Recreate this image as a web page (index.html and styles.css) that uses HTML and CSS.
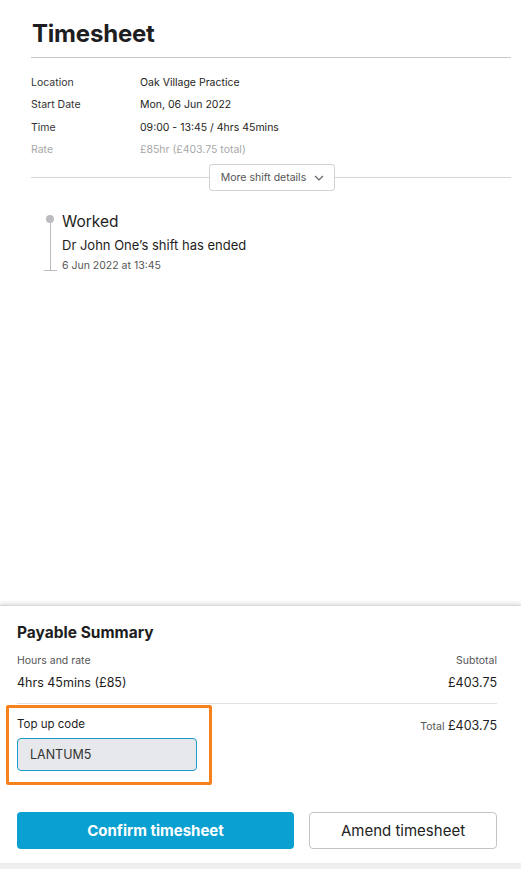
FILE: index.html
```html
<!DOCTYPE html>
<html lang="en">
<head>
<meta charset="utf-8">
<title>Timesheet</title>
<link rel="stylesheet" href="styles.css">
</head>
<body>
<div class="page">
  <main class="main">
    <h1 class="title">Timesheet</h1>
    <div class="details">
      <div class="row"><span class="label">Location</span><span class="value">Oak Village Practice</span></div>
      <div class="row"><span class="label">Start Date</span><span class="value">Mon, 06 Jun 2022</span></div>
      <div class="row"><span class="label">Time</span><span class="value">09:00 - 13:45 / 4hrs 45mins</span></div>
      <div class="row faded"><span class="label">Rate</span><span class="value">£85hr (£403.75 total)</span></div>
    </div>
    <div class="more">
      <button class="more-btn">More shift details
        <svg class="chev" width="10" height="6" viewBox="0 0 10 6"><path d="M1 1l4 4 4-4" fill="none" stroke="#666" stroke-width="1.2"/></svg>
      </button>
    </div>
    <div class="timeline">
      <div class="rail"><span class="dot"></span><span class="line"></span><span class="tick"></span></div>
      <div class="event">
        <div class="event-title">Worked</div>
        <div class="event-text">Dr John One’s shift has ended</div>
        <div class="event-date">6 Jun 2022 at 13:45</div>
      </div>
    </div>
  </main>
  <section class="panel">
    <h2 class="panel-title">Payable Summary</h2>
    <div class="sum-row small">
      <span>Hours and rate</span><span>Subtotal</span>
    </div>
    <div class="sum-row amount">
      <span>4hrs 45mins (£85)</span><span>£403.75</span>
    </div>
    <div class="topup-row">
      <div class="topup">
        <div class="topup-label">Top up code</div>
        <div class="topup-input">LANTUM5</div>
      </div>
      <div class="total"><span class="total-label">Total</span> £403.75</div>
    </div>
    <div class="actions">
      <button class="btn btn-primary">Confirm timesheet</button>
      <button class="btn btn-secondary">Amend timesheet</button>
    </div>
  </section>
  <div class="band"></div>
</div>
</body>
</html>
```

FILE: styles.css
```css
* { box-sizing: border-box; }
html, body { margin: 0; padding: 0; }
body {
  font-family: "Inter", "Lato", sans-serif;
  color: #1e1e22;
  background: #fff;
}
.page {
  min-height: 100vh;
  display: flex;
  flex-direction: column;
}
.main {
  flex: 1;
  padding: 0 10px 0 31px;
}
.title {
  margin: 0;
  padding: 20px 0 9px 1px;
  font-size: 24px;
  line-height: 28px;
  font-weight: 700;
  letter-spacing: -0.2px;
  border-bottom: 1px solid #c8c8c8;
}
.details {
  padding-top: 13px;
  display: flex;
  flex-direction: column;
}
.row {
  display: flex;
  height: 22.5px;
  align-items: center;
  font-size: 10.5px;
}
.label { width: 109px; color: #333; }
.value { color: #1e1e22; }
.faded .label, .faded .value { color: #a8a8a8; }
.more {
  position: relative;
  display: flex;
  justify-content: center;
  margin-top: 3px;
}
.more::before {
  content: "";
  position: absolute;
  left: 0; right: 0;
  top: 13px;
  border-top: 1px solid #d6d6d6;
}
.more-btn {
  position: relative;
  font-family: inherit;
  font-size: 10.5px;
  color: #555;
  background: #fff;
  border: 1px solid #d2d2d2;
  border-radius: 3px;
  height: 27px;
  width: 126px;
  padding: 0 0 0 2px;
  display: flex;
  align-items: center;
  justify-content: center;
  gap: 8px;
  margin-left: 1px;
}
.timeline {
  display: flex;
  margin-top: 21px;
  padding-left: 7px;
}
.rail {
  position: relative;
  width: 24px;
  display: flex;
  flex-direction: column;
  align-items: center;
  padding-top: 3px;
}
.dot {
  width: 8px; height: 8px;
  border-radius: 50%;
  background: #bcbcc0;
}
.line {
  width: 1px;
  height: 47px;
  background: #bcbcc0;
}
.tick {
  width: 13px;
  height: 1px;
  background: #bcbcc0;
}
.event-title {
  font-size: 15.5px;
  line-height: 20px;
}
.event-text {
  font-size: 13px;
  margin-top: 5px;
  line-height: 16px;
}
.event-date {
  font-size: 10.5px;
  color: #555;
  margin-top: 6px;
}
.panel {
  height: 258px;
  box-shadow: 0 -2px 4px rgba(0,0,0,0.12);
  border-top: 1px solid #d8d8d8;
  padding: 17px 24px 0 17px;
  position: relative;
}
.panel-title {
  margin: 0;
  font-size: 15.5px;
  line-height: 20px;
  font-weight: 700;
}
.sum-row {
  display: flex;
  justify-content: space-between;
}
.sum-row.small {
  font-size: 10.5px;
  color: #555;
  margin-top: 11px;
}
.sum-row.amount {
  font-size: 12.5px;
  margin-top: 8px;
  padding-bottom: 13px;
  border-bottom: 1px solid #e2e2e2;
}
.topup-row {
  display: flex;
  justify-content: space-between;
  align-items: flex-start;
  margin-top: 1px;
}
.topup {
  margin-left: -11px;
  width: 206px;
  border: 3px solid #f7821b;
  border-radius: 2px;
  padding: 9px 12px 11px 8px;
}
.topup-label { font-size: 11.5px; }
.topup-input {
  margin-top: 7px;
  width: 180px;
  height: 33px;
  background: #e6e8eb;
  border: 1px solid #1a9bc9;
  border-radius: 4px;
  font-size: 12.5px;
  color: #333;
  display: flex;
  align-items: center;
  padding-left: 12px;
}
.total {
  margin-top: 13px;
  font-size: 12.5px;
}
.total-label { font-size: 10.5px; color: #555; }
.actions {
  display: flex;
  gap: 15px;
  margin-top: 27px;
}
.btn {
  font-family: inherit;
  height: 37px;
  border-radius: 4px;
  font-size: 15px;
}
.btn-primary {
  width: 277px;
  background: #0aa0d2;
  color: #fff;
  font-weight: 700;
  border: none;
}
.btn-secondary {
  width: 188px;
  background: #fff;
  color: #222;
  border: 1px solid #c4c4c4;
}
.band {
  height: 6px;
  background: #efefef;
}
```
